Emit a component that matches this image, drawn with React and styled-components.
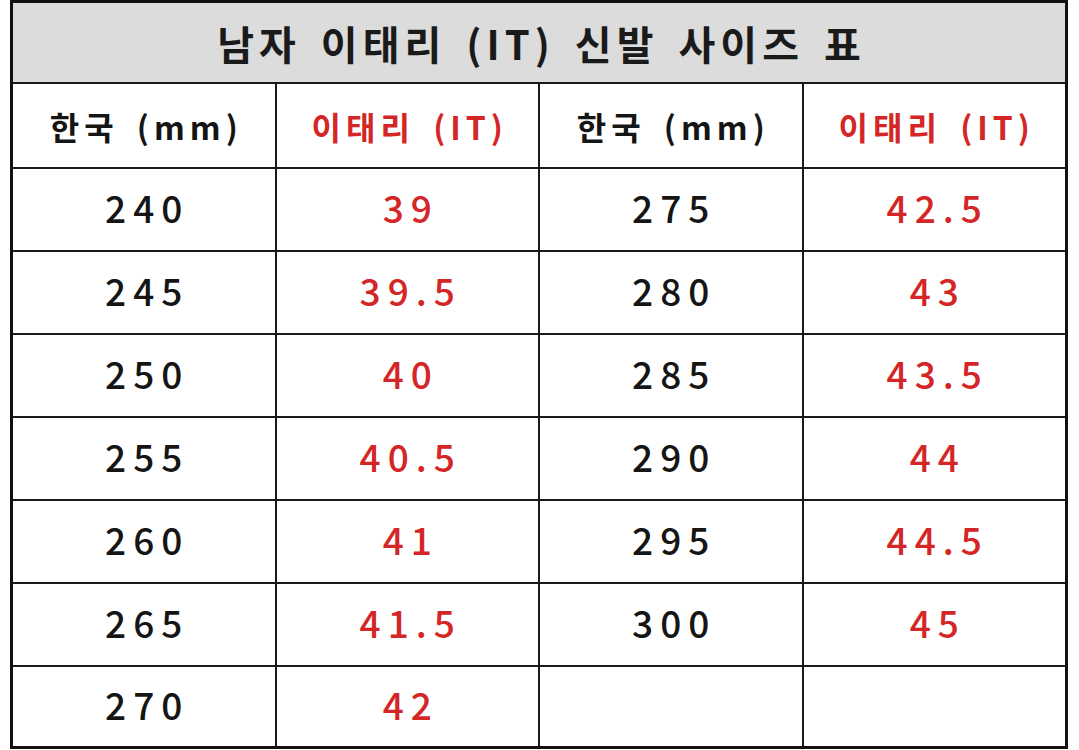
import React from "react";
import styled, { createGlobalStyle } from "styled-components";

const GlobalStyle = createGlobalStyle`
  html, body {
    margin: 0;
    padding: 0;
    background: #ffffff;
  }
  body {
    font-family: "Noto Sans CJK KR", "Noto Sans", sans-serif;
  }
`;

const Table = styled.div`
  box-sizing: border-box;
  width: 1058px;
  margin-left: 10px;
  border: 3px solid #111111;
  background: #1a1a1a;
  display: grid;
  grid-template-columns: repeat(4, 1fr);
  grid-template-rows: 79px 83px repeat(6, 81px) 79px;
  gap: 2px;
`;

const TitleCell = styled.div`
  grid-column: 1 / -1;
  background: #dcdcdc;
  display: flex;
  align-items: center;
  justify-content: center;
  font-size: 40px;
  font-weight: 700;
  letter-spacing: 5px;
  word-spacing: 6px;
  padding-left: 5px;
  color: #1a1a1a;
`;

const HeadCell = styled.div`
  background: #ffffff;
  display: flex;
  align-items: center;
  justify-content: center;
  font-size: 32px;
  font-weight: 700;
  letter-spacing: 5px;
  word-spacing: 6px;
  padding-left: 5px;
  color: ${(p) => (p.$red ? "#d42626" : "#151515")};
`;

const Cell = styled.div`
  background: #ffffff;
  display: flex;
  align-items: center;
  justify-content: center;
  font-size: 37px;
  font-weight: 500;
  letter-spacing: 7px;
  padding: 0 0 5px 7px;
  color: ${(p) => (p.$red ? "#d42626" : "#151515")};
`;

const rows = [
  ["240", "39", "275", "42.5"],
  ["245", "39.5", "280", "43"],
  ["250", "40", "285", "43.5"],
  ["255", "40.5", "290", "44"],
  ["260", "41", "295", "44.5"],
  ["265", "41.5", "300", "45"],
  ["270", "42", "", ""],
];

export default function App() {
  return (
    <>
      <GlobalStyle />
      <Table>
        <TitleCell>남자 이태리 (IT) 신발 사이즈 표</TitleCell>
        <HeadCell>한국 (mm)</HeadCell>
        <HeadCell $red>이태리 (IT)</HeadCell>
        <HeadCell>한국 (mm)</HeadCell>
        <HeadCell $red>이태리 (IT)</HeadCell>
        {rows.map((r, i) =>
          r.map((v, j) => (
            <Cell key={`${i}-${j}`} $red={j % 2 === 1}>
              {v}
            </Cell>
          ))
        )}
      </Table>
    </>
  );
}
